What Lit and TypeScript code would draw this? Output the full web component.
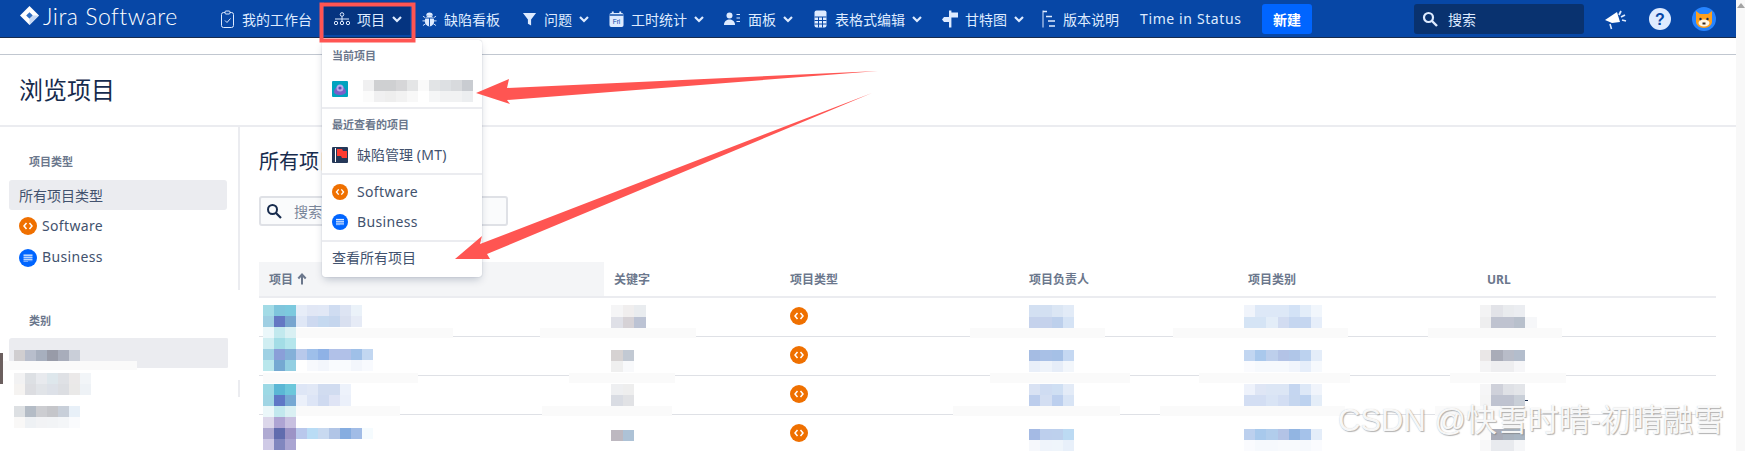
import { LitElement, html, css, svg } from "lit";
import { customElement } from "lit/decorators.js";

const chev = html`<svg class="chev" viewBox="0 0 12 12"><path d="M2 4l4 4 4-4" fill="none" stroke="#deebff" stroke-width="2.2"/></svg>`;

const icons: Record<string, any> = {
  board: html`<svg class="ic" style="width:15px" viewBox="0 0 15 18"><rect x="1.500" y="2.500" width="12" height="15" rx="2" fill="none" stroke="#deebff" stroke-width="1"/><rect x="5" y="1" width="5" height="3" rx="1" fill="#0747a6" stroke="#deebff" stroke-width="1"/><path d="M5 10.500l2 2 3.500-4" fill="none" stroke="#deebff" stroke-width="1"/></svg>`,
  tree: html`<svg class="ic" style="width:16px" viewBox="0 0 16 16"><circle cx="8" cy="3.500" r="1.800" fill="none" stroke="#deebff"/><circle cx="2" cy="12" r="1.700" fill="none" stroke="#deebff"/><circle cx="8" cy="12" r="1.700" fill="none" stroke="#deebff"/><circle cx="14" cy="12" r="1.700" fill="none" stroke="#deebff"/><path d="M1 8h14M8 5.500v5" fill="none" stroke="#deebff"/></svg>`,
  bug: html`<svg class="ic" viewBox="0 0 16 18"><ellipse cx="8" cy="11" rx="5" ry="6" fill="#deebff"/><path d="M4.500 5.500a3.500 3.500 0 017 0z" fill="#deebff"/><path d="M1 6l3 2M15 6l-3 2M0.500 11h3M15.500 11h-3M1 16l3-2M15 16l-3-2" stroke="#deebff" fill="none" stroke-width="1"/><path d="M3 8h10M8 8v9" stroke="#0747a6" stroke-width="1"/></svg>`,
  filter: html`<svg class="ic" viewBox="0 0 16 16"><path d="M1 1.500h14L9.700 8.500V15L6.300 13V8.500z" fill="#deebff"/></svg>`,
  cal: html`<svg class="ic" viewBox="0 0 16 17"><rect x="0.500" y="2" width="15" height="15" rx="2" fill="#deebff"/><rect x="3" y="0.500" width="2" height="3" fill="#deebff"/><rect x="11" y="0.500" width="2" height="3" fill="#deebff"/><rect x="0.500" y="3.500" width="15" height="1.500" fill="#0747a6"/><text x="8" y="14" font-size="7" text-anchor="middle" fill="#0747a6" font-family="Liberation Sans">Fri</text></svg>`,
  person: html`<svg class="ic" style="width:17px" viewBox="0 0 17 16"><circle cx="5.500" cy="4.500" r="3" fill="#deebff"/><path d="M0 14c0-4 3-5.500 5.500-5.500S11 10 11 14z" fill="#deebff"/><path d="M12.500 3.500H16M12.500 7H16M12.500 10.500H16" stroke="#deebff" stroke-width="1.200"/></svg>`,
  table: html`<svg class="ic" viewBox="0 0 14 18"><rect x="1" y="0.500" width="12" height="17" rx="2" fill="#deebff"/><path d="M1 7h12M1 10.500h12M1 14h12M5 7v10.500M9 7v10.500" stroke="#0747a6" stroke-width="1"/></svg>`,
  gantt: html`<svg class="ic" style="width:16px" viewBox="0 0 16 18"><rect x="7" y="0.500" width="2.400" height="17" fill="#deebff"/><path d="M9 2.500h7v5H9zM8 7H2L0 9.500 2 12h6z" fill="#deebff"/></svg>`,
  notes: html`<svg class="ic" style="width:14px;margin-left:-2px" viewBox="0 0 14 18"><path d="M1 0.500v17" stroke="#deebff"/><path d="M1 1.500h4M4 6.500h6M6 11h7M7 16h6" stroke="#deebff" stroke-width="1.600"/></svg>`,
};

const nav = [
  { ic: "board", t: "我的工作台" },
  { ic: "tree", t: "项目", dd: 1, on: 1 },
  { ic: "bug", t: "缺陷看板" },
  { ic: "filter", t: "问题", dd: 1 },
  { ic: "cal", t: "工时统计", dd: 1 },
  { ic: "person", t: "面板", dd: 1 },
  { ic: "table", t: "表格式编辑", dd: 1 },
  { ic: "gantt", t: "甘特图", dd: 1 },
  { ic: "notes", t: "版本说明" },
];

const swIcon = (s: number) => html`<svg width=${s} height=${s} viewBox="0 0 18 18" class="ti"><circle cx="9" cy="9" r="9" fill="#ef7000"/><path d="M7.500 6L5 9l2.500 3M10.500 6L13 9l-2.500 3" fill="none" stroke="#fff" stroke-width="1.500"/></svg>`;
const bizIcon = (s: number) => html`<svg width=${s} height=${s} viewBox="0 0 18 18" class="ti"><circle cx="9" cy="9" r="9" fill="#0065ff"/><path d="M4.500 5.500h9v7h-9z" fill="#deebff"/><path d="M4 7.300h10M4 9.300h10M4 11.300h10" stroke="#0065ff" stroke-width=".8"/><path d="M9 12.700h5" stroke="#0065ff" stroke-width="1"/></svg>`;

type M = { x: number; y: number; w: number; h: number; r: string[] };
const mosaics: M[] = [
  { x: 263, y: 305, w: 11, h: 11, r: ["a3dbe6 7fc5dc 7cc9de e7edf8 e1e7f5 e1e8f6 cfdcf1 dde4f3 ebf2f9", "9fcfe3 6478c3 77a5cf dfe7f6 cdd9f0 c5d9f0 c5d6ee d9e0f0 e6ebf6", "ebf7fa c2e9ee d9f0f3", "d0eef2 a3dde6 b5e6ec", "9fd1e4 8a9fd8 84b0d8 b8c9eb 9ebfea 8fb2e6 b1c1e8 b1c1e8 9fc0e8 c2d7f1", "b9e7ec 75a9d2 93cfe2 ffffff f7f9fd f3f6fc f9fbfe f9fbfe f3f6fc f8fafe"] },
  { x: 263, y: 384, w: 11, h: 11, r: ["9dd9e5 5bb7d5 6cc7db dee6f6 e1e8f6 d1dcf0 d1dcf0 edf2fb", "a0d5e4 5f78c6 76a8d3 ebf0fa dde5f6 cfdaf0 dfe4f5 ebf0fa", "ebf7f9 c2e8ee daf0f3", "dcd7ea aea4d3 c8c0e0", "afaad2 616cae 9c93c6 b9c8ec b9dcf5 c8d9f0 b1c5e6 86ade0 a1bce6 f5fbfe", "cfcae6 8187bf aaa5d2"] },
  { x: 611, y: 305, w: 11.500, h: 11.500, r: ["f5f5f6 f0eeee e9ecef", "dfe0e7 d6d2d6 bcc3d4"] },
  { x: 611, y: 350, w: 11.500, h: 11, r: ["d6d2d2 c2c9d3", "efefef f8f9fb"] },
  { x: 611, y: 384, w: 11.500, h: 11, r: ["eeeff1 eeeeee", "d9dce3 e1e2e5"] },
  { x: 611, y: 430, w: 11.500, h: 11, r: ["bdb8c0 adc2d6"] },
  { x: 1029, y: 305, w: 11.300, h: 11.500, r: ["d3e0f2 d3e0f2 dbe6f4 e2ebf7", "c5d2ec c5d2ec bdd0ec d5e3f5"] },
  { x: 1029, y: 350, w: 11.300, h: 11, r: ["a5bce3 a8c0e6 a5c0e6 c5d8f2", "e9eff9 eef3fa e6edf8 f2f6fb"] },
  { x: 1029, y: 384, w: 11.300, h: 11, r: ["d9e2f3 cfdcf2 cfdff3 e3ebf7", "bccdec d3def2 bccfee d8e4f5"] },
  { x: 1029, y: 429, w: 11.300, h: 11, r: ["a4bae4 bdcfed bdd0ed bcdaf3", "f6f8fc eff4fb eff5fb e8f0fa"] },
  { x: 1244, y: 305, w: 11.200, h: 11.500, r: ["f0f4fb dde8f7 dde8f7 dde8f7 d3e2f6 e3edf9 f1f6fc", "d5e4f5 d5e4f5 e3edf8 d2dcf1 c5d6f0 c5d6f0 e6eefa"] },
  { x: 1244, y: 350, w: 11.200, h: 11, r: ["c2d6f1 a9c8ec bdcfec b3c3e6 b0c6e8 bcd2ef e4edf9", "fafbfe f6f9fd f6f9fd f6f9fd f1f5fc e6eefa f6f9fd"] },
  { x: 1244, y: 384, w: 11.200, h: 11, r: ["eef2fb dfe6f5 dce6f5 dce6f5 c5d6f0 dde8f7 f0f4fb", "d3def3 d3def3 d9e4f5 d3def3 c5d6ef bdd2ef e4edf8"] },
  { x: 1244, y: 429, w: 11.200, h: 11, r: ["bcd0ee a8c9ec b1cdec b3c3e6 92b5e2 a5c2ea e4edf9", "fafbfe f6f9fd f6f9fd f8fafd f8fafd f6f9fd fafbfe"] },
  { x: 1480, y: 305, w: 11.300, h: 11.500, r: ["f3f3f4 e2e3e8 e9ebee ebedf1", "eeeeef bfc3d0 bfc3d0 b8c0cc f6f7f9"] },
  { x: 1480, y: 350, w: 11.300, h: 11, r: ["eae7e7 a9acb8 b8bcc8 b3bdcc", "f4f4f5 eeeef0 eeeef0 f6f6f8"] },
  { x: 1480, y: 384, w: 11.300, h: 11, r: ["f6f6f7 cfd1da dfe1e6 e3e5e9", "f5f5f5 bfc3d0 bfc3d0 c9cfd8"] },
  { x: 1480, y: 429, w: 11.300, h: 11, r: ["fbfbfb a9acb8 a9b2be a9b5c2", "f8f8f9 e8eaee e8eaee f5f6f8"] },
  { x: 14, y: 350, w: 11, h: 11, r: ["d0ced0 b8becc a7afbe 989ba8 a8adbb c9ced8"] },
  { x: 14, y: 373, w: 11, h: 11, r: ["f2f2f3 dde0e4 e8eaee dee7ec dfe1e5 ebe9e9 f2f5f8", "f5f3f1 dcdde1 e1e4e8 dde1e8 dcdee2 eae9e8 eef2f6"] },
  { x: 14, y: 406, w: 11, h: 11, r: ["dde0e3 b4bcc6 cccdd1 c5c6ca c8cfd9 e8f0f8", "f9f8f7 eef1f4 f2f3f5 f2f4f6 f4f6f8 fafbfd"] },
  { x: 363, y: 80, w: 11, h: 11, r: ["f0f0f1 cfd0d2 cfd0d2 d6d6d8 e4e5e6 fafafa e2e4e6 dde0e3 d8dadd c9ccd1", "fbfbfb f0f0f1 eeeeee f2f2f2 f8f8f8 ffffff f5f6f7 f1f2f3 f1f2f3 eceef0"] },
];

// soft whitish smears left by the redaction brush, [x, y, w, h]
const smears = [
  [263, 328, 190, 10], [263, 373, 155, 10], [263, 406, 137, 10],
  [540, 328, 156, 10], [569, 373, 106, 10], [542, 406, 130, 10],
  [970, 328, 135, 10], [990, 373, 140, 10], [953, 406, 167, 10],
  [1173, 328, 175, 10], [1199, 373, 151, 10], [1160, 406, 185, 10],
  [1428, 328, 134, 10], [1450, 373, 116, 10], [1435, 406, 95, 10],
];

const overlay = svg`
  <g shape-rendering="crispEdges">
    <rect x="228" y="290" width="13" height="90" fill="#fff"/>
    <rect x="228" y="397" width="13" height="54" fill="#fff"/>
    <rect x="0" y="361" width="137" height="9" fill="#fafafa"/>
    ${smears.map(([x, y, w, h]) => svg`<rect x=${x} y=${y} width=${w} height=${h} fill="#fafafa"/>`)}
    <rect x="0" y="353" width="3" height="31" fill="#6b5f5e"/>
    <rect x="1525" y="400" width="3" height="1" fill="#172b4d"/>
    ${mosaics.map((m) => m.r.map((row, j) => row.split(" ").map((c, i) => svg`<rect x=${m.x + i * m.w} y=${m.y + j * m.h} width=${m.w} height=${m.h} fill=${"#" + c}/>`)))}
  </g>
  <polygon fill="#ff5552" points="476,93 509,79 507,88 878,71 507,100 510,104"/>
  <polygon fill="#ff5552" points="455,259 482,236 480,244 872,93 487,254 490,259"/>
  <rect x="321.500" y="4.500" width="92" height="36" fill="none" stroke="#ff5552" stroke-width="4"/>
`;

const cols = ["项目", "关键字", "项目类型", "项目负责人", "项目类别", "URL"];

@customElement("app-root")
export class AppRoot extends LitElement {
  static styles = css`
    :host { display: flex; position: relative; width: 1745px; height: 451px; overflow: hidden; background: #fff;
      font-family: "Noto Sans", "Noto Sans CJK SC", sans-serif; font-size: 14px; color: #42526e; }
    .page { width: 1736px; flex: none; display: flex; flex-direction: column; }
    .scroll { flex: 1; background: #f8f8f8; position: relative; }
    .scroll::before { content: ""; display: block; margin: 3px auto 0; width: 0; border: 4px solid transparent; border-top: 0; border-bottom: 5px solid #a3a3a3; }
    .top { height: 37px; flex: none; background: #0747a6; border-bottom: 1px solid #172b4d; display: flex; align-items: center; color: #deebff; }
    .logo { display: flex; align-items: center; margin-left: 20px; width: 190px; gap: 4px; height: 100%; padding-bottom: 6px; box-sizing: border-box; }
    .logo span { font-family: Lato, sans-serif; font-weight: 300; font-size: 23px; color: #fff; letter-spacing: .5px; }
    .item { display: flex; align-items: center; height: 33px; padding: 0 10px; margin-right: 2px; gap: 7px; white-space: nowrap; }
    .item.dd { padding-right: 7px; }
    .item.on { background: #053480; }
    .ic { width: 15px; height: 18px; flex: none; }
    .chev { width: 12px; height: 12px; margin-left: -1px; }
    .plain { padding: 0 0 0 9px; width: 115px; white-space: nowrap; letter-spacing: .62px; }
    .new { width: 50px; height: 30px; background: #0065ff; color: #fff; font-weight: 700; border-radius: 3px; display: flex; align-items: center; justify-content: center; margin-left: 7px; }
    .search { margin-left: 102px; width: 170px; height: 30px; border-radius: 3px; background: #09326f; display: flex; align-items: center; gap: 10px; padding-left: 8px; box-sizing: border-box; }
    .search svg { width: 16px; height: 16px; }
    .tools { display: flex; align-items: center; margin-left: 21px; }
    .tools svg { display: block; }
    .gap { height: 16px; flex: none; border-bottom: 1px solid #c1c7d0; }
    .head { height: 70px; flex: none; box-sizing: border-box; display: flex; align-items: center; padding: 0 0 3px 19px; font-size: 24px; color: #172b4d; }
    .rule { height: 2px; flex: none; background: #ebecf0; }
    .body { flex: 1; display: flex; min-height: 0; }
    .side { width: 238px; flex: none; border-right: 2px solid #ebecf0; box-sizing: content-box; padding-top: 27px; }
    .cap { font-size: 11px; font-weight: 700; color: #6b778c; height: 16px; line-height: 16px; padding-left: 29px; }
    .sel { margin: 10px 11px 0 9px; height: 30px; border-radius: 3px; background: #ebecf0; display: flex; align-items: center; padding: 0 0 1px 10px; box-sizing: border-box; color: #42526e; }
    .row { height: 32px; display: flex; align-items: center; gap: 5px; padding-left: 19px; }
    .row span { position: relative; top: -1px; letter-spacing: .35px; }
    .row.b span { top: -2px; }
    .cap.two { margin-top: 39px; }
    .sel.blank { margin: 9px 9px 0 9px; }
    .main { flex: 1; padding: 23px 20px 0 19px; min-width: 0; }
    h2 { margin: 0; height: 24px; line-height: 24px; font-size: 20px; font-weight: 400; color: #172b4d; }
    .find { margin-top: 22px; width: 249px; height: 30px; box-sizing: border-box; border: 2px solid #dfe1e6; border-radius: 3px; background: #fafbfc; display: flex; align-items: center; padding-left: 5px; gap: 12px; color: #7a869a; }
    .find svg { width: 16px; height: 16px; }
    .grid { margin-top: 36px; display: grid; grid-template-columns: 345px 176px 239px 219px 239px 239px; }
    .th { height: 34px; display: flex; align-items: center; gap: 4px; padding-left: 10px; font-size: 12px; font-weight: 700; color: #6b778c; border-bottom: 2px solid #ebecf0; }
    .th.first { background: #f4f5f7; }
    .td { height: 38px; box-sizing: border-box; border-bottom: 1px solid #dfe1e6; display: flex; align-items: center; padding: 0 0 2px 10px; height: 39px; }
    .ti { flex: none; display: block; }
    .menu { position: absolute; left: 322px; top: 40px; width: 160px; height: 237px; background: #fff; border-radius: 3px; box-shadow: 0 4px 8px -2px rgba(9,30,66,.25), 0 0 1px rgba(9,30,66,.31); }
    .sec { border-bottom: 2px solid #ebecf0; padding-bottom: 3px; }
    .sec:last-child { border: 0; }
    .mcap { font-size: 11px; font-weight: 700; color: #6b778c; height: 16px; line-height: 16px; padding: 8px 0 10px 10px; }
    .mcap.second { padding: 8px 0 7px 10px; }
    .mi { height: 30px; display: flex; align-items: center; gap: 9px; padding-left: 10px; }
    .mi span { position: relative; top: -1px; }
    .mi .ls { letter-spacing: .35px; }
    .mi .all { top: -2px; }
    .sec.plainsec { padding-top: 2px; }
    .draw { position: absolute; left: 0; top: 0; pointer-events: none; }
    .mark { position: absolute; left: 1338px; top: 401px; font-size: 31px; line-height: 40px; white-space: nowrap; font-family: "Liberation Sans", "Noto Sans CJK SC", sans-serif; color: rgba(255,255,255,.92); text-shadow: 1px 1px 1px rgba(120,120,120,.55), 0 0 1px rgba(150,150,150,.5); pointer-events: none; }
  `;

  render() {
    return html`
      <div class="page">
        <div class="top">
          <div class="logo">
            <svg width="19" height="19" viewBox="0 0 20 20"><path d="M10 0l10 10-10 10L0 10z" fill="#fff"/><path d="M10 6.500l3.500 3.500-3.500 3.500L6.500 10z" fill="#2f6fc4"/><path d="M10 13.500L13.500 10 20 10 10 20z" fill="#c5d8f4"/></svg>
            <span>Jira Software</span>
          </div>
          ${nav.map((n) => html`<div class="item ${n.dd ? "dd" : ""} ${n.on ? "on" : ""}">${icons[n.ic]}<span>${n.t}</span>${n.dd ? chev : ""}</div>`)}
          <div class="plain">Time in Status</div>
          <div class="new">新建</div>
          <div class="search">
            <svg viewBox="0 0 16 16"><circle cx="6.500" cy="6.500" r="4.500" fill="none" stroke="#deebff" stroke-width="2.200"/><path d="M10 10l5 5" stroke="#deebff" stroke-width="2.400"/></svg>
            <span>搜索</span>
          </div>
          <div class="tools">
            <svg width="22" height="24" viewBox="0 0 22 24"><path d="M0 13L12 5l3 10-8 1z" fill="#fff"/><path d="M5 17l1.500 5" stroke="#deebff" stroke-width="1.600"/><path d="M14 8l2-4M16 10l4-2M17 13l4 1" stroke="#deebff" stroke-width="1.800"/></svg>
            <svg style="margin-left:22px" width="22" height="22" viewBox="0 0 22 22"><circle cx="11" cy="11" r="11" fill="#deebff"/><text x="11" y="16.500" text-anchor="middle" font-size="16" font-weight="700" fill="#0747a6" font-family="Liberation Sans">?</text></svg>
            <svg style="margin-left:21px" width="24" height="24" viewBox="0 0 24 24"><circle cx="12" cy="12" r="12" fill="#2684ff"/><path d="M4 4l4 3h8l4-3v11a8 6 0 01-16 0z" fill="#ff9f1a"/><ellipse cx="12" cy="16" rx="5.500" ry="3.500" fill="#fff6e5"/><circle cx="8.500" cy="12" r="1.200" fill="#172b4d"/><circle cx="15.500" cy="12" r="1.200" fill="#172b4d"/><path d="M10.500 15.500h3v2h-3z" fill="#3d2a1a"/></svg>
          </div>
        </div>
        <div class="gap"></div>
        <div class="head">浏览项目</div>
        <div class="rule"></div>
        <div class="body">
          <aside class="side">
            <div class="cap">项目类型</div>
            <div class="sel">所有项目类型</div>
            <div class="row">${swIcon(18)}<span>Software</span></div>
            <div class="row b">${bizIcon(18)}<span>Business</span></div>
            <div class="cap two">类别</div>
            <div class="sel blank"></div>
          </aside>
          <section class="main">
            <h2>所有项目</h2>
            <div class="find">
              <svg viewBox="0 0 16 16"><circle cx="6.500" cy="6.500" r="4.500" fill="none" stroke="#172b4d" stroke-width="2"/><path d="M10 10l5 5" stroke="#172b4d" stroke-width="2.200"/></svg>
              <span>搜索</span>
            </div>
            <div class="grid">
              ${cols.map((c, i) => html`<div class="th ${i === 0 ? "first" : ""}">${c}${i === 0 ? html`<svg width="10" height="12" viewBox="0 0 10 12"><path d="M5 11.500V2M1.300 5.500L5 1.500 8.700 5.500" fill="none" stroke="#6b778c" stroke-width="2"/></svg>` : ""}</div>`)}
              ${[0, 1, 2, 3].map(() => cols.map((_, i) => html`<div class="td">${i === 2 ? swIcon(18) : ""}</div>`))}
            </div>
          </section>
        </div>
      </div>
      <div class="scroll"></div>
      <div class="menu">
        <div class="sec">
          <div class="mcap">当前项目</div>
          <div class="mi">
            <svg class="ti" width="16" height="16" viewBox="0 0 16 16"><rect width="16" height="16" rx="1" fill="#00a3bf"/><path d="M2 11a6 5.500 0 0112 0c0 2-3 3-6 3s-6-1-6-3z" fill="#7a5fc9"/><circle cx="8" cy="7" r="3.500" fill="#b9a8e8"/><circle cx="8" cy="7" r="1.600" fill="#5e4db2"/></svg>
          </div>
        </div>
        <div class="sec">
          <div class="mcap second">最近查看的项目</div>
          <div class="mi">
            <svg class="ti" width="16" height="16" viewBox="0 0 16 16"><rect width="16" height="16" rx="1" fill="#253858"/><path d="M3 1h1v14H3z" fill="#fff"/><path d="M5 2h5l1 2h4v7h-5l-1-2H5z" fill="#ff3b30"/></svg>
            <span>缺陷管理 <span class="ls" style="top:0">(MT)</span></span>
          </div>
        </div>
        <div class="sec plainsec">
          <div class="mi">${swIcon(16)}<span class="ls">Software</span></div>
          <div class="mi">${bizIcon(16)}<span class="ls">Business</span></div>
        </div>
        <div class="sec plainsec">
          <div class="mi"><span class="all">查看所有项目</span></div>
        </div>
      </div>
      <svg class="draw" width="1745" height="451" viewBox="0 0 1745 451">${overlay}</svg>
      <div class="mark">CSDN @快雪时晴-初晴融雪</div>
    `;
  }
}
